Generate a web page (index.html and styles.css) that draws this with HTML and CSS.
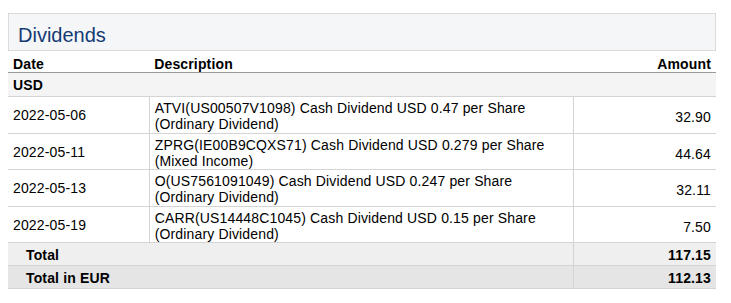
FILE: index.html
```html
<!DOCTYPE html>
<html>
<head>
<meta charset="utf-8">
<link rel="stylesheet" href="styles.css">
</head>
<body>
<div class="section">
  <div class="section-head"><h2 class="title">Dividends</h2></div>
  <table class="tbl">
    <thead>
      <tr class="head-row">
        <th class="c-date">Date</th>
        <th class="c-desc">Description</th>
        <th class="c-amt">Amount</th>
      </tr>
    </thead>
    <tbody>
      <tr class="cur-row"><td colspan="3">USD</td></tr>
      <tr class="data-row">
        <td class="c-date">2022-05-06</td>
        <td class="c-desc">ATVI(US00507V1098) Cash Dividend USD 0.47 per Share<br>(Ordinary Dividend)</td>
        <td class="c-amt">32.90</td>
      </tr>
      <tr class="data-row">
        <td class="c-date">2022-05-11</td>
        <td class="c-desc">ZPRG(IE00B9CQXS71) Cash Dividend USD 0.279 per Share<br>(Mixed Income)</td>
        <td class="c-amt">44.64</td>
      </tr>
      <tr class="data-row">
        <td class="c-date">2022-05-13</td>
        <td class="c-desc">O(US7561091049) Cash Dividend USD 0.247 per Share<br>(Ordinary Dividend)</td>
        <td class="c-amt">32.11</td>
      </tr>
      <tr class="data-row">
        <td class="c-date">2022-05-19</td>
        <td class="c-desc">CARR(US14448C1045) Cash Dividend USD 0.15 per Share<br>(Ordinary Dividend)</td>
        <td class="c-amt">7.50</td>
      </tr>
      <tr class="total-row">
        <td class="c-total" colspan="2">Total</td>
        <td class="c-amt">117.15</td>
      </tr>
      <tr class="total-row eur">
        <td class="c-total" colspan="2">Total in EUR</td>
        <td class="c-amt">112.13</td>
      </tr>
    </tbody>
  </table>
</div>
</body>
</html>
```
FILE: styles.css
```css
html, body {
  margin: 0;
  padding: 0;
  background: #ffffff;
}
body {
  padding: 13px 15px 0 8px;
  font-family: "Liberation Sans", Arial, sans-serif;
  font-size: 14px;
  color: #000;
}
.section {
  width: 708px;
}
.section-head {
  background: #f5f6f8;
  border: 1px solid #dadada;
  box-sizing: border-box;
  height: 38px;
  display: flex;
  align-items: center;
  padding: 6px 0 0 9px;
}
.title {
  margin: 0;
  font-weight: normal;
  font-size: 20px;
  line-height: 22px;
  color: #133b74;
}
.tbl {
  width: 708px;
  border-collapse: collapse;
  table-layout: fixed;
  letter-spacing: 0.15px;
}
.tbl th, .tbl td {
  padding: 0 5px;
  vertical-align: middle;
  line-height: 16px;
}
.c-date { width: 131px; text-align: left; }
.c-desc { width: 414px; text-align: left; }
.c-amt { width: 132px; text-align: right; }
.head-row th {
  font-weight: bold;
  padding-top: 5px;
  padding-bottom: 0;
  border-bottom: 1px solid #9a9a9a;
}
.cur-row td {
  background: #f4f4f4;
  font-weight: bold;
  padding-top: 4px;
  padding-bottom: 3px;
  border-bottom: 1px solid #d4d4d4;
}
.data-row td {
  padding-top: 3px;
  padding-bottom: 0.5px;
  border-bottom: 1px solid #d4d4d4;
}
.data-row .c-desc {
  border-left: 1px solid #d4d4d4;
  border-right: 1px solid #d4d4d4;
}
.data-row .c-date {
  padding-top: 2px;
  padding-bottom: 1.5px;
}
.data-row .c-amt {
  padding-top: 5px;
}
.total-row td {
  background: #efefef;
  font-weight: bold;
  padding-top: 4px;
  padding-bottom: 2px;
  border-bottom: 1px solid #d4d4d4;
}
.total-row.eur td {
  background: #e5e5e5;
}
.total-row .c-total {
  padding-left: 18px;
}
.total-row .c-amt {
  border-left: 1px solid #d4d4d4;
}
```
